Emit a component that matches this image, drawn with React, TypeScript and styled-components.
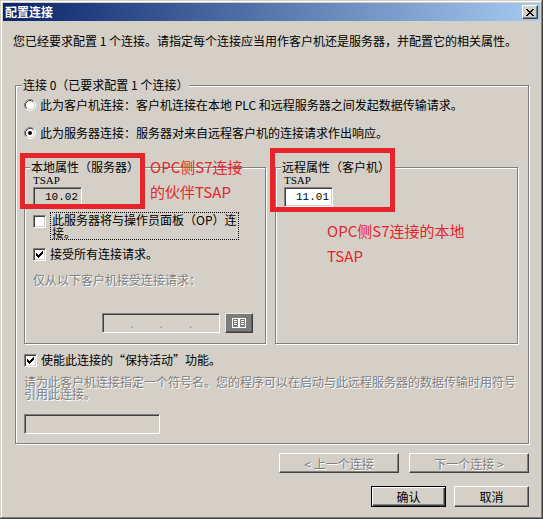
import React from 'react';
import styled, { createGlobalStyle } from 'styled-components';

const FACE = '#d4d0c8';
const RED = '#e4262c';

const GlobalStyle = createGlobalStyle`
  html, body {
    margin: 0;
    padding: 0;
    background: ${FACE};
  }
  body {
    font-family: "Noto Sans CJK SC", "Liberation Sans", sans-serif;
    font-size: 12px;
    color: #000;
  }
`;

const Window = styled.div`
  position: relative;
  width: 543px;
  height: 519px;
  box-sizing: border-box;
  padding: 3px;
  background: ${FACE};
  box-shadow: inset -1px -1px #404040, inset 1px 1px ${FACE},
    inset -2px -2px #808080, inset 2px 2px #fff;
  display: flex;
  flex-direction: column;
`;

const TitleBar = styled.div`
  height: 18px;
  flex: none;
  display: flex;
  align-items: center;
  justify-content: space-between;
  padding-left: 2px;
  background: linear-gradient(to right, #0a246a, #a6caf0);
`;

const TitleText = styled.span`
  color: #fff;
  font-weight: bold;
  line-height: 18px;
`;

const Raised = styled.button`
  box-sizing: border-box;
  padding: 0;
  margin: 0;
  background: ${FACE};
  border: 1px solid;
  border-color: #fff #404040 #404040 #fff;
  box-shadow: inset -1px -1px #808080, inset 1px 1px ${FACE};
  font-family: "Noto Sans CJK SC", "Liberation Sans", sans-serif;
  font-size: 12px;
  color: #000;
  display: flex;
  align-items: center;
  justify-content: center;
`;

const CloseButton = styled(Raised)`
  width: 16px;
  height: 14px;
  margin-right: 2px;
`;

const Content = styled.div`
  display: flex;
  flex-direction: column;
  padding: 0 10px;
`;

const Intro = styled.p`
  margin: 13px 0 0;
  line-height: 14px;
  white-space: nowrap;
`;

const GroupBox = styled.fieldset`
  margin: 0;
  min-width: 0;
  border: 1px solid #808080;
  box-shadow: inset 1px 1px 0 #fff, 1px 1px 0 #fff;
  display: flex;
  flex-direction: column;
`;

const GroupTitle = styled.legend<{ $shift: number }>`
  margin-left: ${p => p.$shift}px;
  padding: 0 1px;
  background: ${FACE};
  line-height: 14px;
  white-space: nowrap;
`;

const MainGroup = styled(GroupBox)`
  margin: 30px 1px 0 2px;
  padding: 6px 11px 9px 8px;
`;

const SubGroup = styled(GroupBox)`
  padding: 1px 8px 10px 8px;
`;

const OptionRow = styled.label<{ $mt?: number }>`
  display: flex;
  align-items: center;
  gap: 4px;
  height: 14px;
  line-height: 14px;
  margin-top: ${p => p.$mt ?? 0}px;
  white-space: nowrap;
`;

const Columns = styled.div`
  display: grid;
  grid-template-columns: 242px 243px;
  column-gap: 9px;
  margin-top: 20px;
`;

const FieldLabel = styled.div`
  font-family: "Liberation Serif", serif;
  font-size: 11px;
  line-height: 10px;
  height: 10px;
`;

const Edit = styled.div<{ $w: number; $h?: number; $readOnly?: boolean }>`
  width: ${p => p.$w}px;
  height: ${p => p.$h ?? 20}px;
  flex: none;
  box-sizing: border-box;
  border: 1px solid;
  border-color: #808080 #fff #fff #808080;
  box-shadow: inset 1px 1px #404040, inset -1px -1px ${FACE};
  background: ${p => (p.$readOnly ? FACE : '#fff')};
  font-family: "Liberation Mono", monospace;
  font-size: 11px;
  display: flex;
  align-items: center;
  justify-content: flex-end;
  padding: 0 3px;
`;

const TsapEdit = styled(Edit)`
  margin-top: 2px;
`;

const OpRow = styled.div`
  display: flex;
  align-items: flex-start;
  gap: 4px;
  margin-top: 5px;
`;

const FocusLabel = styled.div`
  border: 1px dotted #000;
  padding: 0 1px;
  line-height: 13px;
  white-space: nowrap;
`;

const DisabledText = styled.div<{ $mt?: number; $lh?: number }>`
  margin-top: ${p => p.$mt ?? 0}px;
  line-height: ${p => p.$lh ?? 14}px;
  color: #808080;
  text-shadow: 1px 1px 0 #fff;
`;

const IpRow = styled.div`
  display: flex;
  gap: 5px;
  margin: 26px 0 0 69px;
`;

const IpEdit = styled(Edit)`
  justify-content: space-between;
  padding: 0 2px;
`;

const IpSegment = styled.span`
  flex: 1;
`;

const IpDot = styled.span`
  color: #808080;
  font-size: 9px;
  line-height: 20px;
  padding-top: 6px;
`;

const IconButton = styled(Raised)`
  width: 28px;
  height: 20px;
  background: #7c7c7c;
  border-color: #e8e8e8 #404040 #404040 #e8e8e8;
  box-shadow: inset -1px -1px #5a5a5a;
`;

const NameEdit = styled(Edit)`
  margin-top: 14px;
`;

const ButtonRow = styled.div<{ $mt: number; $gap: number }>`
  display: flex;
  justify-content: flex-end;
  gap: ${p => p.$gap}px;
  margin-top: ${p => p.$mt}px;
  padding-right: 1px;
`;

const PushButton = styled(Raised)<{ $w: number; $h: number; $default?: boolean }>`
  width: ${p => p.$w}px;
  height: ${p => p.$h}px;
  ${p =>
    p.$default
      ? `border-color: #000;
         box-shadow: inset 1px 1px #fff, inset -1px -1px #404040, inset -2px -2px #808080;`
      : ''}
  &:disabled {
    color: #808080;
    text-shadow: 1px 1px 0 #fff;
  }
`;

const CheckFrame = styled.span<{ $mt?: number }>`
  width: 13px;
  height: 13px;
  flex: none;
  box-sizing: border-box;
  margin-top: ${p => p.$mt ?? 0}px;
  background: #fff;
  border: 1px solid;
  border-color: #808080 #fff #fff #808080;
  box-shadow: inset 1px 1px #404040, inset -1px -1px ${FACE};
  display: flex;
  align-items: center;
  justify-content: center;
`;

const Callout = styled.div<{ $x: number; $y: number; $w: number; $h: number }>`
  position: absolute;
  left: ${p => p.$x}px;
  top: ${p => p.$y}px;
  width: ${p => p.$w}px;
  height: ${p => p.$h}px;
  box-sizing: border-box;
  border: 5px solid ${RED};
`;

const Note = styled.div<{ $x: number; $y: number }>`
  position: absolute;
  left: ${p => p.$x}px;
  top: ${p => p.$y}px;
  color: ${RED};
  font-size: 15px;
  line-height: 25px;
  white-space: nowrap;
`;

// pixel glyphs, one string per row
const PixelGlyph: React.FC<{ rows: string[]; color?: string }> = ({ rows, color = '#000' }) => (
  <svg width={rows[0].length} height={rows.length} shapeRendering="crispEdges">
    {rows.map((row, y) =>
      row.split('').map((c, x) =>
        c === 'x' ? <rect key={`${x}-${y}`} x={x} y={y} width={1} height={1} fill={color} /> : null
      )
    )}
  </svg>
);

const CLOSE_ROWS = ['xx....xx', '.xx..xx.', '..xxxx..', '...xx...', '..xxxx..', '.xx..xx.', 'xx....xx'];
const CHECK_ROWS = ['......x', '.....xx', 'x...xxx', 'xx.xxx.', 'xxxxx..', '.xxx...', '..x....'];

const CheckBox: React.FC<{ checked?: boolean; mt?: number }> = ({ checked, mt }) => (
  <CheckFrame $mt={mt}>{checked && <PixelGlyph rows={CHECK_ROWS} />}</CheckFrame>
);

const Radio: React.FC<{ checked?: boolean }> = ({ checked }) => (
  <svg width="12" height="12" viewBox="0 0 12 12" style={{ flex: 'none' }}>
    <circle cx="6" cy="6" r="5" fill="#fff" />
    <path d="M2.11 9.89 A5.5 5.5 0 0 1 9.89 2.11" stroke="#808080" fill="none" />
    <path d="M9.89 2.11 A5.5 5.5 0 0 1 2.11 9.89" stroke="#fff" fill="none" />
    <path d="M2.82 9.18 A4.5 4.5 0 0 1 9.18 2.82" stroke="#404040" fill="none" />
    <path d="M9.18 2.82 A4.5 4.5 0 0 1 2.82 9.18" stroke={FACE} fill="none" />
    {checked && <circle cx="6" cy="6" r="2" fill="#000" />}
  </svg>
);

const BookIcon: React.FC = () => (
  <svg width="16" height="12" viewBox="0 0 16 12" shapeRendering="crispEdges">
    <path d="M1.5 1.5v9h6v-9zM8.5 1.5v9h6v-9z" stroke="#fff" fill="none" />
    <path d="M3 3.5h3M3 5.5h3M3 7.5h3M10 3.5h3M10 5.5h3M10 7.5h3" stroke="#fff" />
  </svg>
);

const App: React.FC = () => {
  return (
    <>
      <GlobalStyle />
      <Window>
        <TitleBar>
          <TitleText>配置连接</TitleText>
          <CloseButton>
            <PixelGlyph rows={CLOSE_ROWS} />
          </CloseButton>
        </TitleBar>
        <Content>
          <Intro>您已经要求配置 1 个连接。请指定每个连接应当用作客户机还是服务器，并配置它的相关属性。</Intro>
          <MainGroup>
            <GroupTitle $shift={-2}>连接 0（已要求配置 1 个连接）</GroupTitle>
            <OptionRow>
              <Radio />
              此为客户机连接：客户机连接在本地 PLC 和远程服务器之间发起数据传输请求。
            </OptionRow>
            <OptionRow $mt={14}>
              <Radio checked />
              此为服务器连接：服务器对来自远程客户机的连接请求作出响应。
            </OptionRow>
            <Columns>
              <SubGroup>
                <GroupTitle $shift={-3}>本地属性（服务器）</GroupTitle>
                <FieldLabel>TSAP</FieldLabel>
                <TsapEdit $w={49} $readOnly>10.02</TsapEdit>
                <OpRow>
                  <CheckBox mt={3} />
                  <FocusLabel>
                    此服务器将与操作员面板（OP）连
                    <br />
                    接。
                  </FocusLabel>
                </OpRow>
                <OptionRow $mt={7}>
                  <CheckBox checked />
                  接受所有连接请求。
                </OptionRow>
                <DisabledText $mt={12}>仅从以下客户机接受连接请求：</DisabledText>
                <IpRow>
                  <IpEdit $w={118} $readOnly>
                    <IpSegment />
                    <IpDot>.</IpDot>
                    <IpSegment />
                    <IpDot>.</IpDot>
                    <IpSegment />
                    <IpDot>.</IpDot>
                    <IpSegment />
                  </IpEdit>
                  <IconButton>
                    <BookIcon />
                  </IconButton>
                </IpRow>
              </SubGroup>
              <SubGroup>
                <GroupTitle $shift={-3}>远程属性（客户机）</GroupTitle>
                <FieldLabel>TSAP</FieldLabel>
                <TsapEdit $w={49}>11.01</TsapEdit>
              </SubGroup>
            </Columns>
            <OptionRow $mt={9}>
              <CheckBox checked />
              使能此连接的“保持活动”功能。
            </OptionRow>
            <DisabledText $mt={9} $lh={12}>
              请为此客户机连接指定一个符号名。您的程序可以在启动与此远程服务器的数据传输时用符号引用此连接。
            </DisabledText>
            <NameEdit $w={136} $readOnly />
          </MainGroup>
          <ButtonRow $mt={9} $gap={10}>
            <PushButton $w={120} $h={20} disabled>
              &lt; 上一个连接
            </PushButton>
            <PushButton $w={120} $h={20} disabled>
              下一个连接 &gt;
            </PushButton>
          </ButtonRow>
          <ButtonRow $mt={13} $gap={8}>
            <PushButton $w={75} $h={21} $default>
              确认
            </PushButton>
            <PushButton $w={75} $h={21}>
              取消
            </PushButton>
          </ButtonRow>
        </Content>
        <Callout $x={20} $y={153} $w={125} $h={56} />
        <Note $x={150} $y={154}>
          OPC侧S7连接
          <br />
          的伙伴TSAP
        </Note>
        <Callout $x={270} $y={148} $w={125} $h={64} />
        <Note $x={327} $y={218}>
          OPC侧S7连接的本地
          <br />
          TSAP
        </Note>
      </Window>
    </>
  );
};

export default App;
